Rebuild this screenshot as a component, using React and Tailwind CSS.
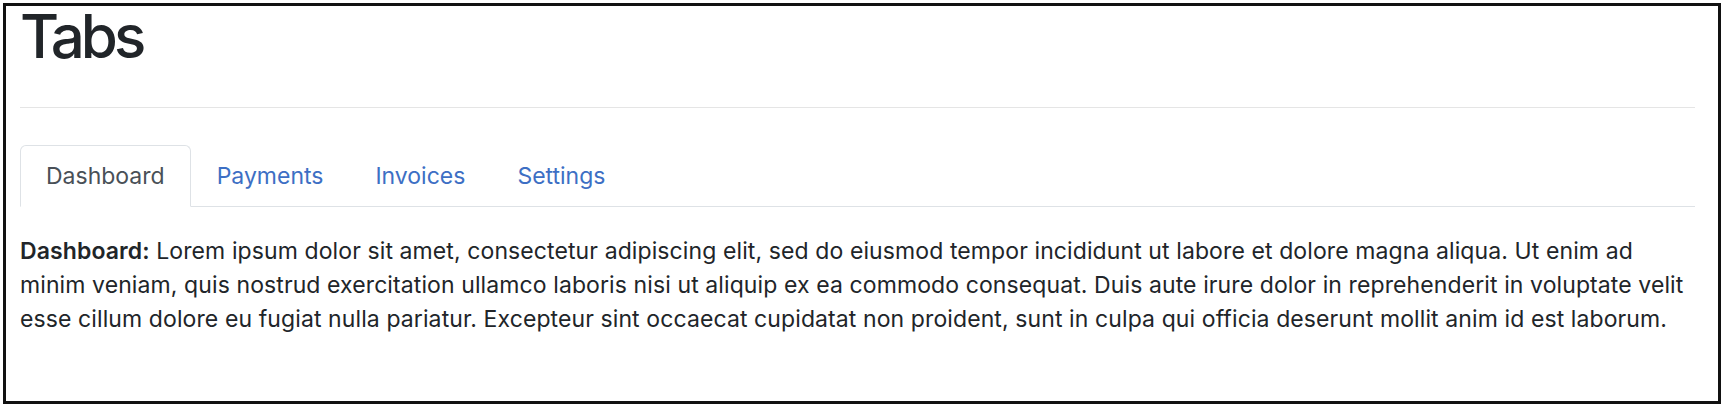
export default function App() {
  const tabs = ["Dashboard", "Payments", "Invoices", "Settings"];
  return (
    <div className="w-[1725px] h-[409px] bg-white pt-[3px] pl-[3px] font-['Inter',sans-serif]">
      <div className="w-[1718px] h-[401px] border-[3px] border-[#111] pl-[14px] pr-[23px]">
        <h1 className="text-[60px] leading-none font-medium text-[#212529] tracking-[-4px]">Tabs</h1>
        <div className="mt-[41px] h-px bg-[#e5e5e5]"></div>
        <div className="mt-[37px] flex border-b border-[#dee2e6]">
          {tabs.map((t, i) =>
            i === 0 ? (
              <div
                key={t}
                className="-mb-px h-[62px] px-[25px] flex items-center border border-[#dee2e6] border-b-white rounded-t-[6px] bg-white text-[23px] text-[#495057]"
              >
                {t}
              </div>
            ) : (
              <div
                key={t}
                className="-mb-px h-[62px] px-[25px] flex items-center border border-transparent text-[23px] text-[#3d6fc4]"
              >
                {t}
              </div>
            )
          )}
        </div>
        <p className="mt-[27px] text-[23px] leading-[34px] tracking-[0.1px] whitespace-nowrap text-[#212529]">
          <b className="font-semibold">Dashboard:</b> Lorem ipsum dolor sit amet, consectetur adipiscing elit, sed do eiusmod tempor incididunt ut labore et dolore magna aliqua. Ut enim ad
          <br />
          minim veniam, quis nostrud exercitation ullamco laboris nisi ut aliquip ex ea commodo consequat. Duis aute irure dolor in reprehenderit in voluptate velit
          <br />
          esse cillum dolore eu fugiat nulla pariatur. Excepteur sint occaecat cupidatat non proident, sunt in culpa qui officia deserunt mollit anim id est laborum.
        </p>
      </div>
    </div>
  );
}
